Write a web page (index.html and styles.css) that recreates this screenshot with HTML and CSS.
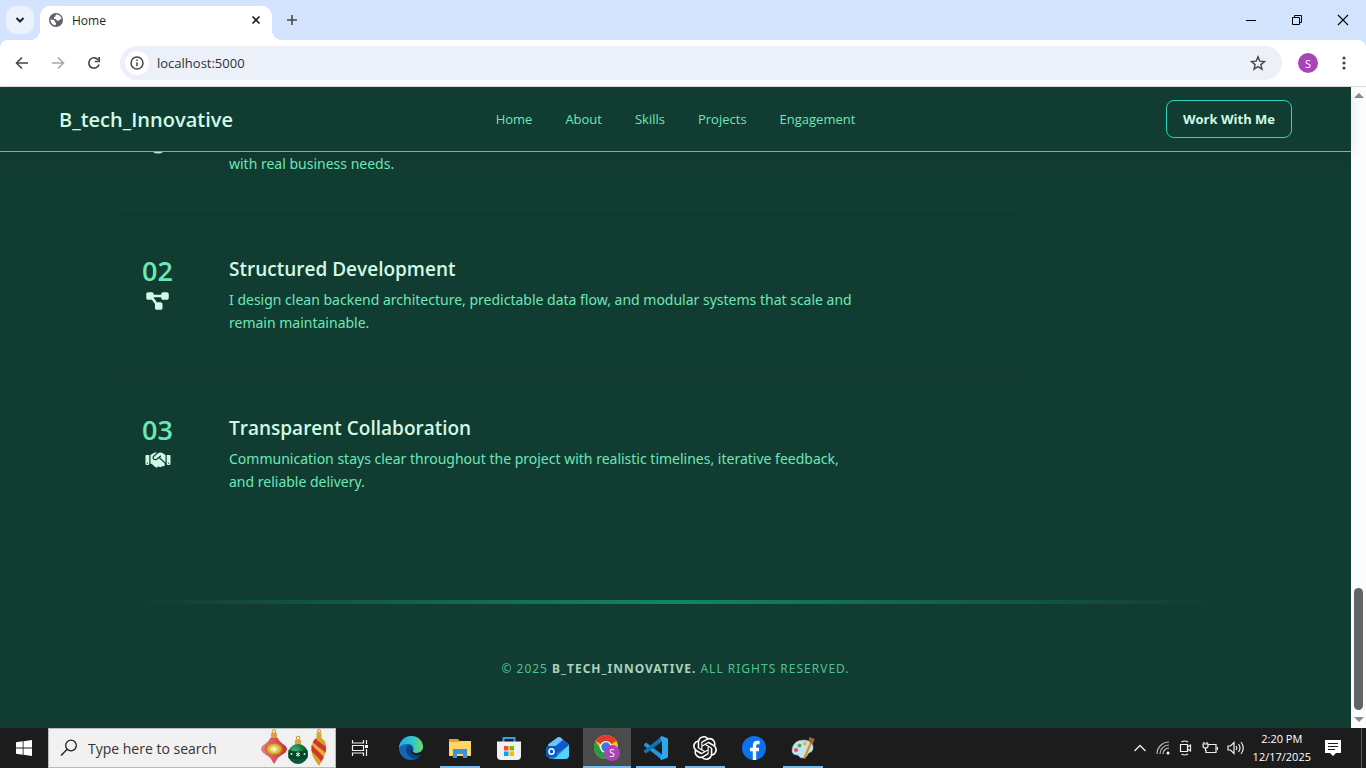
FILE: index.html
```html
<!DOCTYPE html>
<html lang="en">
<head>
  <meta charset="UTF-8" />
  <meta name="viewport" content="width=device-width, initial-scale=1.0" />
  <title>Home</title>
  <link rel="stylesheet" href="styles.css">
</head>
<body>

  <!-- Browser tabs -->
  <div class="tab-strip">
    <button class="tab-search" aria-label="Search tabs">
      <svg width="10" height="10" viewBox="0 0 10 10"><path d="M1.500 3L5 6.500 8.500 3" fill="none" stroke="#1f1f1f" stroke-width="2"/></svg>
    </button>
    <div class="tab">
      <svg width="16" height="16" viewBox="0 0 16 16">
        <circle cx="8" cy="8" r="7" fill="#5f6368"/>
        <path d="M8.500 2.500c2.500 0 4.500 1.800 5 4-.5 1-1.500.5-2 1.500s-1.500.5-2.500.5-.5-1.500-1.500-1.500-2-.5-1.500-1.500 1.500-.5 1.500-1.500.5-1.500 1-1.500zM2.500 7.500c1.500 0 3 .2 4 1 .8.700 0 1.500 1 2s.5 1.500 0 2.800c-3-.2-5-2.600-5-5.800z" fill="#fff"/>
      </svg>
      <span class="tab-title">Home</span>
      <button class="icon-btn" aria-label="Close tab">
        <svg width="10" height="10" viewBox="0 0 10 10"><path d="M1.500 1.500l7 7M8.500 1.500l-7 7" stroke="#1f1f1f" stroke-width="1.700"/></svg>
      </button>
    </div>
    <button class="icon-btn new-tab" aria-label="New tab">
      <svg width="12" height="12" viewBox="0 0 12 12"><path d="M6 1v10M1 6h10" stroke="#474747" stroke-width="1.600"/></svg>
    </button>
    <div class="window-controls">
      <button aria-label="Minimize"><svg width="12" height="12" viewBox="0 0 12 12"><path d="M1 6.500h10" stroke="#000"/></svg></button>
      <button aria-label="Restore"><svg width="12" height="12" viewBox="0 0 12 12"><path d="M1.500 3.500h7v7h-7zM3.500 3.500v-2h7v7h-2" fill="none" stroke="#000"/></svg></button>
      <button aria-label="Close"><svg width="12" height="12" viewBox="0 0 12 12"><path d="M1 1l10 10M11 1L1 11" stroke="#000" stroke-width="1.100"/></svg></button>
    </div>
  </div>

  <!-- Browser toolbar -->
  <div class="toolbar-wrap">
    <div class="toolbar">
      <button class="tool-btn" aria-label="Back"><svg width="16" height="16" viewBox="0 0 16 16"><path d="M14 8H3M8 2.500L2.500 8 8 13.500" fill="none" stroke="#474747" stroke-width="1.600"/></svg></button>
      <button class="tool-btn" aria-label="Forward"><svg width="16" height="16" viewBox="0 0 16 16"><path d="M2 8h11M8 2.500L13.500 8 8 13.500" fill="none" stroke="#a9a9a9" stroke-width="1.600"/></svg></button>
      <button class="tool-btn" aria-label="Reload"><svg width="16" height="16" viewBox="0 0 16 16"><path d="M13 9.500A5.200 5.200 0 1 1 12.300 5" fill="none" stroke="#474747" stroke-width="1.700"/><path d="M13.200 2v4.500H8.700" fill="none" stroke="#474747" stroke-width="1.700"/></svg></button>
      <div class="address-bar">
        <button class="site-info" aria-label="Site information"><svg width="16" height="16" viewBox="0 0 16 16"><circle cx="8" cy="8" r="6" fill="none" stroke="#474747" stroke-width="1.500"/><path d="M8 7.200v4M8 4.600v1.500" stroke="#474747" stroke-width="1.500"/></svg></button>
        <input type="text" aria-label="Address" value="localhost:5000">
        <button class="icon-btn" aria-label="Bookmark this page"><svg width="16" height="16" viewBox="0 0 16 16"><path d="M8 1.800l1.800 4.300 4.700.4-3.600 3.100 1.100 4.600L8 11.700l-4 2.500 1.100-4.600L1.500 6.500l4.700-.4z" fill="none" stroke="#474747" stroke-width="1.400"/></svg></button>
      </div>
      <button class="profile" aria-label="Profile">S</button>
      <button class="icon-btn" aria-label="Menu"><svg width="16" height="16" viewBox="0 0 16 16" fill="#474747"><circle cx="8" cy="3" r="1.600"/><circle cx="8" cy="8" r="1.600"/><circle cx="8" cy="13" r="1.600"/></svg></button>
    </div>
  </div>

  <!-- Page -->
  <div class="viewport">
    <div class="page">
      <header class="site-header">
        <a class="brand" href="#">B_tech_Innovative</a>
        <nav class="site-nav">
          <a href="#">Home</a>
          <a href="#">About</a>
          <a href="#">Skills</a>
          <a href="#">Projects</a>
          <a href="#">Engagement</a>
        </nav>
        <button class="work-btn">Work With Me</button>
      </header>

      <main class="content">
        <section class="steps">
          <article class="step">
            <div class="step-mark step-mark-end">
              <svg width="20" height="20" viewBox="0 0 20 20"><circle cx="10" cy="10" r="7" fill="none" stroke="#d1fae5" stroke-width="5"/></svg>
            </div>
            <p class="step-end">with real business needs.</p>
          </article>

          <article class="step">
            <div class="step-mark">
              <span class="step-number">02</span>
              <svg width="23" height="20" viewBox="0 0 576 512" fill="#d1fae5"><path d="M0 80C0 53.500 21.500 32 48 32h96c26.500 0 48 21.500 48 48v16h192V80c0-26.500 21.500-48 48-48h96c26.500 0 48 21.500 48 48v96c0 26.500-21.500 48-48 48h-96c-26.500 0-48-21.500-48-48v-16H192v16c0 1.700-.1 3.400-.3 5L272 288h96c26.500 0 48 21.500 48 48v96c0 26.500-21.500 48-48 48h-96c-26.500 0-48-21.500-48-48v-96c0-1.700.1-3.400.3-5L144 224H48c-26.500 0-48-21.500-48-48V80z"/></svg>
            </div>
            <div>
              <h3>Structured Development</h3>
              <p>I design clean backend architecture, predictable data flow, and modular systems that scale and remain maintainable.</p>
            </div>
          </article>

          <article class="step">
            <div class="step-mark">
              <span class="step-number">03</span>
              <svg width="26" height="20" viewBox="0 0 640 512" fill="#d1fae5"><path d="M323.400 85.200l-96.800 78.400c-16.100 13-19.200 36.400-7 53.100c12.900 17.800 38 21.300 55.300 7.800l99.300-77.200c7-5.400 17-4.200 22.500 2.800s4.200 17-2.800 22.500l-20.900 16.200L512 316.800V128h-.7l-3.900-2.500L434.800 79c-15.300-9.800-33.200-15-51.400-15c-21.800 0-43 7.500-60 21.200zm22.800 124.400l-51.700 40.200C263 274.300 217.300 268 193.700 235.600c-22.200-30.500-16.600-73.100 12.700-96.800l83.200-67.300c-11.600-4.900-24.100-7.400-36.800-7.400C234 64 215.700 69.600 200 80l-72 48V352h28.200l91.400 83.400c19.600 17.900 49.900 16.500 67.800-3.100c5.500-6.100 9.200-13.200 11.100-20.600l17 15.600c19.500 17.900 49.900 16.600 67.800-2.900c4.500-4.900 7.800-10.600 9.900-16.500c19.400 13 45.800 10.300 62.100-7.500c17.900-19.500 16.600-49.900-2.900-67.800l-134.200-123zM16 128c-8.800 0-16 7.200-16 16V352c0 17.700 14.300 32 32 32H64c17.700 0 32-14.300 32-32V128H16zM48 320a16 16 0 1 1 0 32 16 16 0 1 1 0-32zM544 128V352c0 17.700 14.300 32 32 32h32c17.700 0 32-14.300 32-32V144c0-8.800-7.200-16-16-16H544zm32 208a16 16 0 1 1 32 0 16 16 0 1 1 -32 0z"/></svg>
            </div>
            <div>
              <h3>Transparent Collaboration</h3>
              <p>Communication stays clear throughout the project with realistic timelines, iterative feedback, and reliable delivery.</p>
            </div>
          </article>
        </section>

        <footer class="site-footer">
          <p>© 2025 <strong>B_tech_Innovative.</strong> All rights reserved.</p>
        </footer>
      </main>
    </div>

    <div class="scrollbar">
      <span class="arrow arrow-up"></span>
      <span class="track"><span class="thumb"></span></span>
      <span class="arrow arrow-down"></span>
    </div>
  </div>

  <!-- Taskbar -->
  <div class="taskbar">
    <button class="task" aria-label="Start">
      <svg width="16" height="16" viewBox="0 0 16 16" fill="#fff"><path d="M0 2.300L6.700 1.300V7.600H0zM7.500 1.200L16 0v7.600H7.500zM0 8.400h6.700v6.300L0 13.700zM7.500 8.400H16V16l-8.500-1.200z"/></svg>
    </button>
    <div class="search-box">
      <svg width="18" height="18" viewBox="0 0 18 18"><circle cx="11" cy="6.500" r="5.300" fill="none" stroke="#222" stroke-width="1.300"/><path d="M7.200 10.300L1 16.500" stroke="#222" stroke-width="1.400"/></svg>
      <input type="text" aria-label="Search" placeholder="Type here to search">
      <svg width="68" height="38" viewBox="0 0 68 38">
        <defs>
          <linearGradient id="red" x1="0" x2="1"><stop offset="0" stop-color="#f07a86"/><stop offset="1" stop-color="#c52c43"/></linearGradient>
          <radialGradient id="gold"><stop offset="0" stop-color="#fff6b0"/><stop offset="1" stop-color="#d39c1c"/></radialGradient>
          <radialGradient id="green" cx=".35" cy=".3"><stop offset="0" stop-color="#43b177"/><stop offset="1" stop-color="#0c5a37"/></radialGradient>
          <clipPath id="drop"><path d="M59 8c6 2 8 7 7 12-.5 7-4 11-7 17-4-6-7-9-7.500-16-.3-6 2-12 7.500-13z"/></clipPath>
        </defs>
        <circle cx="14" cy="2.500" r="1.800" fill="none" stroke="#c69230"/>
        <path d="M11 4h6v6h-6z" fill="#d9a43b"/>
        <path d="M10 9h8c1 5 9 7 9 11 0 5-9 6-11 12l-2 3-2-3C10 26 1 25 1 20c0-4 8-6 9-11z" fill="url(#red)"/>
        <ellipse cx="14" cy="20" rx="9" ry="6.500" fill="#b77c10"/>
        <ellipse cx="14" cy="20" rx="7.500" ry="5.500" fill="url(#gold)"/>
        <path d="M14 17v6M11 20h6" stroke="#fff8cc"/>
        <circle cx="38" cy="9" r="1.800" fill="none" stroke="#c69230"/>
        <path d="M35 11h6v5h-6z" fill="#d9a43b"/>
        <circle cx="38" cy="25" r="10" fill="url(#green)"/>
        <path d="M28.500 21q9.500 3 19 0v8q-9.500 3-19 0z" fill="#084629"/>
        <path d="M38 23v5M36 24.300l4 2.400M40 24.300l-4 2.400" stroke="#d6f2e2"/>
        <circle cx="31.500" cy="25" r="1" fill="#d6f2e2"/><circle cx="44.500" cy="25" r="1" fill="#d6f2e2"/>
        <circle cx="59" cy="2" r="1.500" fill="none" stroke="#c69230"/>
        <path d="M56.500 3.500h5V9h-5z" fill="#d9a43b"/>
        <g clip-path="url(#drop)"><path d="M50 5h20v34H50z" fill="#d9a02c"/><path d="M52 8c3 7 10 8 16 15M50 17c5 7 10 8 14 16" fill="none" stroke="#cf352d" stroke-width="4.500"/><path d="M51 13c5 7 10 8 15 15" fill="none" stroke="#f6d568"/></g>
      </svg>
    </div>
    <button class="task" aria-label="Task View">
      <svg width="18" height="18" viewBox="0 0 18 18" fill="none" stroke="#eee" stroke-width="1.200"><path d="M1.500 1v3h11V1M1.500 17v-3h11v3M1.500 6.500h11v5h-11zM15.500 1v4M15.500 10v7"/><path d="M14 6h3v3h-3z" fill="#fff" stroke="none"/></svg>
    </button>

    <div class="apps">
      <button class="task" aria-label="Edge">
        <svg width="24" height="24" viewBox="0 0 24 24">
          <defs>
            <linearGradient id="edge-top" x1="0" x2="1"><stop offset="0" stop-color="#29a6e8"/><stop offset=".6" stop-color="#35c7c4"/><stop offset="1" stop-color="#6fdc55"/></linearGradient>
          </defs>
          <circle cx="12" cy="12" r="12" fill="#1266b4"/>
          <path d="M0 12C.5 5 5.500 0 12 0c7 0 12 5 12 10.500 0 4-3 6.500-6.500 6.500-3 0-4.500-1-3.500-2.500 2-3-.5-6.500-5-6.500-4 0-7.500 1.500-9 4z" fill="url(#edge-top)"/>
          <path d="M9 9c-3 3-2.500 10 4.500 13.500 3.500.5 7-1.500 9-4.500-4 2-9 1-10.500-2-1-2 .5-3 1-4s-1.500-3.500-4-3z" fill="#0c3f86"/>
          <path d="M14 14.500c-1 1.500.5 2.500 3.500 2.500 2.500 0 5-1 6.300-4v5l-1.500.5c-4 2-9 .5-10-2-.8-2 .2-3 .7-4 .8.500 1 1.300 1 2z" fill="#1c1c1c"/>
        </svg>
      </button>
      <button class="task running" aria-label="File Explorer">
        <svg width="22" height="20" viewBox="0 0 22 20"><path d="M0 1h9l1.500 2H22v15H0z" fill="#e8a317"/><path d="M0 4h10l1-1h11v15H0z" fill="#ffd667"/><path d="M4 11h14v9h-4v-4H8v4H4z" fill="#3b93d8"/></svg>
      </button>
      <button class="task" aria-label="Store">
        <svg width="24" height="24" viewBox="0 0 24 24"><path d="M6.500 6V2h11v4" fill="none" stroke="#23a7e8" stroke-width="2"/><path d="M0 5.500h24V20q0 4-4 4H4q-4 0-4-4z" fill="#f1f1f1"/><path d="M7 10h4.500v4.500H7z" fill="#f25022"/><path d="M12.500 10H17v4.500h-4.500z" fill="#7fba00"/><path d="M7 15.500h4.500V20H7z" fill="#00a4ef"/><path d="M12.500 15.500H17V20h-4.500z" fill="#ffb900"/></svg>
      </button>
      <button class="task" aria-label="Outlook">
        <svg width="24" height="24" viewBox="0 0 24 24"><path d="M2 8.500L11.500 1.500q1.500-1 3 0L23 8.500V19q0 4-4 4H6q-4 0-4-4z" fill="#1688e8"/><path d="M2 8.500L11.500 1.500q1.500-1 3 0L17 4 4 14z" fill="#63c7fb"/><path d="M17 4l6 5-14 10-2-6z" fill="#1458c8"/><path d="M23 9v10q0 4-4 4H8z" fill="#59d0fa"/><rect y="10" width="11" height="11" rx="2" fill="#0c5ac0"/><ellipse cx="5.500" cy="15.500" rx="2.500" ry="2.800" fill="none" stroke="#fff" stroke-width="1.500"/></svg>
      </button>
      <button class="task running active" aria-label="Chrome">
        <svg width="26" height="26" viewBox="0 0 26 26"><circle cx="12" cy="12" r="12" fill="#fbc116"/><path d="M12 12L1.600 6A12 12 0 0 1 22.400 6z" fill="#e33b2e"/><path d="M1.600 6A12 12 0 0 0 12 24l5.200-9L12 12 6.800 15z" fill="#249b4b"/><circle cx="12" cy="12" r="6" fill="#fff"/><circle cx="12" cy="12" r="4.700" fill="#347be6"/><circle cx="18" cy="18" r="8" fill="#a944b8"/><text x="18" y="22" class="badge-text">S</text></svg>
      </button>
      <button class="task running" aria-label="Visual Studio Code">
        <svg width="24" height="24" viewBox="0 0 24 24"><path d="M0 8.500L2 6.500 18 18.500V24L0 9.500z" fill="#1f9ae0"/><path d="M0 15.500l2 2L18 5.500V0L0 14.500z" fill="#1272b8"/><path d="M17.500 0L24 2.500v19L17.500 24l-1.500-1.500 2-4v-13l-2-4z" fill="#2ba7ef"/></svg>
      </button>
      <button class="task running" aria-label="ChatGPT">
        <svg width="24" height="24" viewBox="0 0 24 24" fill="#fff"><path d="M22.2819 9.8211a5.9847 5.9847 0 0 0-.5157-4.9108 6.0462 6.0462 0 0 0-6.5098-2.9A6.0651 6.0651 0 0 0 4.9807 4.1818a5.9847 5.9847 0 0 0-3.9977 2.9 6.0462 6.0462 0 0 0 .7427 7.0966 5.98 5.98 0 0 0 .511 4.9107 6.051 6.051 0 0 0 6.5146 2.9001A5.9847 5.9847 0 0 0 13.2599 24a6.0557 6.0557 0 0 0 5.7718-4.2058 5.9894 5.9894 0 0 0 3.9977-2.9001 6.0557 6.0557 0 0 0-.7475-7.0729zm-9.022 12.6081a4.4755 4.4755 0 0 1-2.8764-1.0408l.1419-.0804 4.7783-2.7582a.7948.7948 0 0 0 .3927-.6813v-6.7369l2.02 1.1686a.071.071 0 0 1 .038.052v5.5826a4.504 4.504 0 0 1-4.4945 4.4944zm-9.6607-4.1254a4.4708 4.4708 0 0 1-.5346-3.0137l.142.0852 4.783 2.7582a.7712.7712 0 0 0 .7806 0l5.8428-3.3685v2.3324a.0804.0804 0 0 1-.0332.0615L9.74 19.9502a4.4992 4.4992 0 0 1-6.1408-1.6464zM2.3408 7.8956a4.485 4.485 0 0 1 2.3655-1.9728V11.6a.7664.7664 0 0 0 .3879.6765l5.8144 3.3543-2.0201 1.1685a.0757.0757 0 0 1-.071 0l-4.8303-2.7865A4.504 4.504 0 0 1 2.3408 7.872zm16.5963 3.8558L13.1038 8.364 15.1192 7.2a.0757.0757 0 0 1 .071 0l4.8303 2.7913a4.4944 4.4944 0 0 1-.6765 8.1042v-5.6772a.79.79 0 0 0-.407-.667zm2.0107-3.0231l-.142-.0852-4.7735-2.7818a.7759.7759 0 0 0-.7854 0L9.409 9.2297V6.8974a.0662.0662 0 0 1 .0284-.0615l4.8303-2.7866a4.4992 4.4992 0 0 1 6.6802 4.66zM8.3065 12.863l-2.02-1.1638a.0804.0804 0 0 1-.038-.0567V6.0742a4.4992 4.4992 0 0 1 7.3757-3.4537l-.142.0805L8.704 5.459a.7948.7948 0 0 0-.3927.6813zm1.0976-2.3654l2.602-1.4998 2.6069 1.4998v2.9994l-2.5974 1.4997-2.6067-1.4997Z"/></svg>
      </button>
      <button class="task" aria-label="Facebook">
        <svg width="24" height="24" viewBox="0 0 24 24"><circle cx="12" cy="12" r="12" fill="#0c72ee"/><path d="M17.500 6.500h-2q-3 0-3 3V24M8 13.500h9" fill="none" stroke="#fff" stroke-width="3.400"/></svg>
      </button>
      <button class="task running" aria-label="Paint">
        <svg width="24" height="24" viewBox="0 0 24 24"><path d="M1 15C1 7 7 4 13 4c6 0 10 4 9 9-1 4-4 3-5 5s-2 4-6 4c-3 0-3-3-5-3s-5-1-5-4z" fill="#c3e2f2" stroke="#88aabe" stroke-width=".5"/><circle cx="5" cy="14" r="2" fill="#e05353"/><circle cx="8.500" cy="9.500" r="2" fill="#46af50"/><circle cx="14" cy="7.500" r="2" fill="#efb82c"/><path d="M12 22L20 4l2 1-8 18z" fill="#e58a28"/><path d="M18 1l6 2-2.500 5-3.500-2z" fill="#9b6540"/></svg>
      </button>
    </div>

    <div class="tray">
      <svg width="14" height="10" viewBox="0 0 14 10"><path d="M1.500 8L7 2.500 12.500 8" fill="none" stroke="#eee" stroke-width="1.300"/></svg>
      <svg width="14" height="14" viewBox="0 0 14 14" fill="none" stroke="#bbb" stroke-width="1.200"><path d="M1 13A12 12 0 0 1 13 1M4 13a9 9 0 0 1 9-9M7 13a6 6 0 0 1 6-6"/><circle cx="12" cy="12" r="1.500" fill="#fff" stroke="none"/></svg>
      <svg width="14" height="16" viewBox="0 0 14 16" fill="none" stroke="#eee" stroke-width="1.200"><path d="M1.500 4.500h7v7h-7zM8.500 7L11.500 5v6l-3-2M2.500 2q3-2 6.500 0M2.500 14q3 2 6.500 0"/></svg>
      <svg width="16" height="14" viewBox="0 0 16 14" fill="none" stroke="#eee" stroke-width="1.200"><path d="M6 3.500h8v8H4V9M15.500 6v3M1 3h5v2q0 2-2.500 2T1 5zM2 1v2M5 1v2M3.500 7v3"/></svg>
      <svg width="17" height="14" viewBox="0 0 17 14" fill="none" stroke="#eee" stroke-width="1.200"><path d="M1 5h2.500L7 1.500v11L3.500 9H1zM9 5q1.500 2 0 4M11.500 3q3 4 0 8M14 1q4.500 6 0 12"/></svg>
      <div class="clock"><span>2:20 PM</span><span>12/17/2025</span></div>
      <svg class="notes" width="16" height="16" viewBox="0 0 16 16"><path d="M0 0h16v13h-5l-3 3-3-3H0z" fill="#fff"/><path d="M3 3.500h10M3 6.500h10M3 9.500h7" stroke="#1c1c1c"/></svg>
    </div>
  </div>

</body>
</html>
```

FILE: styles.css
```css
* {
  box-sizing: border-box;
}

body {
  margin: 0;
  height: 100vh;
  display: flex;
  flex-direction: column;
  overflow: hidden;
  font-family: 'Open Sans', sans-serif;
  background-color: #fff;
}

button {
  display: flex;
  align-items: center;
  justify-content: center;
  padding: 0;
  border: none;
  background: none;
  font-family: inherit;
}

input {
  flex: 1;
  min-width: 0;
  padding: 0;
  border: none;
  background: none;
  font-family: inherit;
  outline: none;
}

svg {
  display: block;
  flex-shrink: 0;
}

a {
  text-decoration: none;
}

/* Browser tabs */
.tab-strip {
  display: flex;
  align-items: center;
  height: 40px;
  flex-shrink: 0;
  padding-left: 6px;
  background-color: #d3e3fd;
}

.tab-search {
  width: 28px;
  height: 28px;
  border-radius: 10px;
  background-color: #ebf1fd;
}

.tab {
  position: relative;
  display: flex;
  align-items: center;
  align-self: flex-end;
  gap: 8px;
  width: 232px;
  height: 34px;
  margin-left: 6px;
  padding: 0 8px 6px;
  border-radius: 10px 10px 0 0;
  background-color: #fff;
}

/* curved feet of the active tab */
.tab::before,
.tab::after {
  content: '';
  position: absolute;
  bottom: 0;
  width: 10px;
  height: 10px;
}

.tab::before {
  right: 100%;
  background: radial-gradient(circle at 0 0, transparent 10px, #fff 10px);
}

.tab::after {
  left: 100%;
  background: radial-gradient(circle at 100% 0, transparent 10px, #fff 10px);
}

.tab-title {
  flex: 1;
  font-size: 12px;
  color: #1f1f1f;
}

.icon-btn {
  width: 16px;
  height: 16px;
}

.new-tab {
  margin-left: 12px;
}

.window-controls {
  display: flex;
  margin-left: auto;
}

.window-controls button {
  width: 46px;
  height: 40px;
}

/* Browser toolbar */
.toolbar-wrap {
  flex-shrink: 0;
  background-color: #d3e3fd;
}

.toolbar {
  display: flex;
  align-items: center;
  gap: 8px;
  height: 47px;
  padding: 0 14px 0 8px;
  border-bottom: 1px solid #dcdfe0;
  border-radius: 8px 8px 0 0;
  background-color: #fff;
}

.tool-btn {
  width: 28px;
  height: 28px;
}

.address-bar {
  display: flex;
  align-items: center;
  flex: 1;
  gap: 8px;
  height: 34px;
  margin-left: 4px;
  padding: 0 16px 0 5px;
  border-radius: 17px;
  background-color: #ecf0f9;
}

.address-bar input {
  font-size: 13px;
  color: #303134;
}

.site-info {
  width: 24px;
  height: 24px;
  border-radius: 50%;
  background-color: #fff;
}

.profile {
  width: 20px;
  height: 20px;
  margin: 0 10px 0 8px;
  border-radius: 50%;
  background-color: #a944b8;
  color: #fff;
  font-size: 11px;
}

/* Page */
.viewport {
  display: flex;
  flex: 1;
  min-height: 0;
}

.page {
  display: flex;
  flex-direction: column;
  flex: 1;
  background-color: #113c32;
}

.site-header {
  display: grid;
  grid-template-columns: 1fr auto 1fr;
  align-items: center;
  height: 65px;
  flex-shrink: 0;
  padding: 0 59px;
  border-bottom: 1px solid #2dd4bf;
  box-shadow: 0 4px 12px rgba(0, 0, 0, 0.1);
  z-index: 1;
}

.brand {
  font-size: 20px;
  font-weight: 600;
  color: #d1fae5;
}

.site-nav {
  display: flex;
  gap: 33px;
}

.site-nav a {
  font-size: 13px;
  font-weight: 500;
  color: #6ee7b7;
}

.work-btn {
  justify-self: end;
  height: 38px;
  padding: 0 16px;
  border: 1px solid #2dd4bf;
  border-radius: 8px;
  font-size: 13px;
  font-weight: 700;
  color: #d1fae5;
}

.content {
  display: flex;
  flex-direction: column;
  justify-content: flex-end;
  flex: 1;
  min-height: 0;
  overflow: hidden;
}

.steps {
  width: 100%;
  max-width: 1115px;
  margin: 0 auto;
}

.step {
  display: grid;
  grid-template-columns: 79px 1fr;
  column-gap: 32px;
  max-width: 900px;
  padding: 40px 0;
  border-bottom: 1px solid #12352c;
}

.step:first-child {
  padding-top: 0;
}

.step:last-child {
  border-bottom: none;
}

.step-mark {
  display: flex;
  flex-direction: column;
  align-items: center;
  gap: 5px;
}

.step-mark-end {
  padding-bottom: 21px;
}

.step-number {
  font-size: 27px;
  font-weight: 600;
  line-height: 30px;
  color: #6ee7b7;
}

.step h3 {
  margin: 0 0 6px;
  font-size: 19px;
  font-weight: 600;
  line-height: 26px;
  color: #d1fae5;
}

.step p {
  max-width: 632px;
  margin: 0;
  font-family: 'Noto Sans', sans-serif;
  font-size: 14px;
  line-height: 23px;
  color: #6ee7b7;
}

.step .step-end {
  align-self: end;
}

.site-footer {
  margin-top: 67px;
  padding-bottom: 48px;
  text-align: center;
}

.site-footer::before {
  content: '';
  display: block;
  width: 80%;
  height: 4px;
  margin: 0 auto 53px;
  background: linear-gradient(90deg, transparent, #118760, transparent);
}

.site-footer p {
  margin: 0;
  font-family: 'Noto Sans', sans-serif;
  font-size: 12px;
  line-height: 23px;
  letter-spacing: 1px;
  text-transform: uppercase;
  color: #4fc293;
}

.site-footer strong {
  font-weight: 700;
  color: #a9d3bf;
}

.scrollbar {
  display: flex;
  flex-direction: column;
  align-items: center;
  width: 15px;
  padding: 6px 0;
  background-color: #fcfcfc;
}

.arrow {
  border: 5px solid transparent;
}

.arrow-up {
  border-top: none;
  border-bottom-color: #8b8b8b;
}

.arrow-down {
  border-bottom: none;
  border-top-color: #8b8b8b;
}

.track {
  display: flex;
  flex-direction: column;
  justify-content: flex-end;
  flex: 1;
  padding-bottom: 7px;
}

.thumb {
  width: 9px;
  height: 20%;
  border-radius: 5px;
  background-color: #636363;
}

/* Taskbar */
.taskbar {
  display: flex;
  align-items: center;
  height: 40px;
  flex-shrink: 0;
  background-color: #1c1c1c;
}

.task {
  width: 48px;
  height: 40px;
}

.search-box {
  display: flex;
  align-items: center;
  gap: 10px;
  width: 288px;
  height: 40px;
  padding: 0 7px 0 11px;
  border: 1px solid #b9b9b9;
  background-color: #f1f1f1;
}

.search-box input {
  font-size: 14px;
}

.search-box input::placeholder {
  color: #333;
}

.apps {
  display: flex;
  gap: 1px;
  margin-left: 3px;
}

.running {
  background: linear-gradient(#76b9ed, #76b9ed) center bottom / 40px 2px no-repeat;
}

.active {
  background-color: #4b4b4b;
  background-size: 100% 2px;
}

.badge-text {
  font-size: 10px;
  fill: #fff;
  text-anchor: middle;
}

.tray {
  display: flex;
  align-items: center;
  gap: 9px;
  margin-left: auto;
  margin-right: 4px;
  padding-right: 20px;
  height: 40px;
  border-right: 1px solid #5a5a5a;
}

.clock {
  display: flex;
  flex-direction: column;
  align-items: center;
  font-size: 11px;
  line-height: 18px;
  color: #fff;
}

.notes {
  margin-left: 5px;
}
```
